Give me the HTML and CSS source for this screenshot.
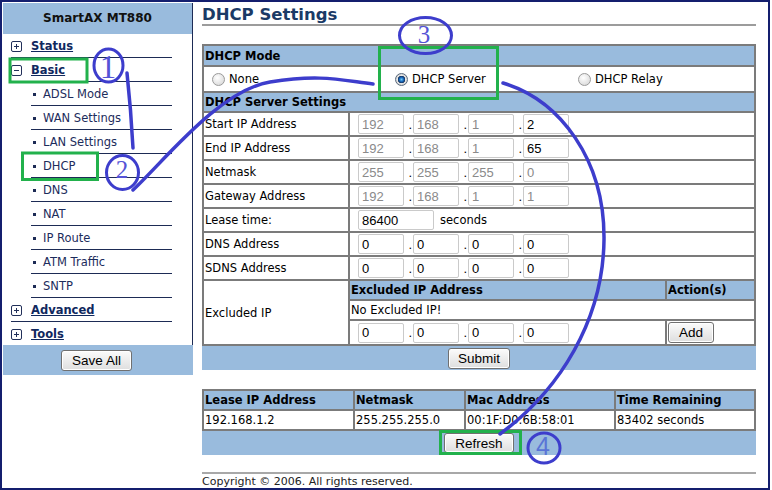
FILE: index.html
```html
<!DOCTYPE html>
<html lang="en">
<head>
  <meta charset="UTF-8" />
  <title>DHCP Settings</title>
  <link rel="stylesheet" href="styles.css">
</head>
<body>
<div class="page">
  <div class="frame">
    <aside class="side">
      <div class="side-head">SmartAX MT880</div>
      <ul class="menu">
        <li class="top"><span class="box plus"></span><a href="#">Status</a></li>
        <li class="top"><span class="box"></span><a href="#">Basic</a></li>
        <li class="sub"><a href="#">ADSL Mode</a></li>
        <li class="sub"><a href="#">WAN Settings</a></li>
        <li class="sub"><a href="#">LAN Settings</a></li>
        <li class="sub"><a href="#">DHCP</a></li>
        <li class="sub"><a href="#">DNS</a></li>
        <li class="sub"><a href="#">NAT</a></li>
        <li class="sub"><a href="#">IP Route</a></li>
        <li class="sub"><a href="#">ATM Traffic</a></li>
        <li class="sub"><a href="#">SNTP</a></li>
        <li class="top"><span class="box plus"></span><a href="#">Advanced</a></li>
        <li class="top last"><span class="box plus"></span><a href="#">Tools</a></li>
      </ul>
      <div class="side-foot"><button class="btn">Save All</button></div>
    </aside>

    <main class="content">
      <h1>DHCP Settings</h1>

      <div class="form-grid">
        <div class="hd span3">DHCP Mode</div>
        <div class="modes span3">
          <label class="mode"><span class="radio"></span>None</label>
          <label class="mode"><span class="radio on"></span>DHCP Server</label>
          <label class="mode"><span class="radio"></span>DHCP Relay</label>
        </div>
        <div class="hd span3">DHCP Server Settings</div>

        <div class="lbl">Start IP Address</div>
        <div class="val span2">
          <input class="field" value="192" disabled><span class="dot">.</span><input class="field" value="168" disabled><span class="dot">.</span><input class="field" value="1" disabled><span class="dot">.</span><input class="field" value="2">
        </div>

        <div class="lbl">End IP Address</div>
        <div class="val span2">
          <input class="field" value="192" disabled><span class="dot">.</span><input class="field" value="168" disabled><span class="dot">.</span><input class="field" value="1" disabled><span class="dot">.</span><input class="field" value="65">
        </div>

        <div class="lbl">Netmask</div>
        <div class="val span2">
          <input class="field" value="255" disabled><span class="dot">.</span><input class="field" value="255" disabled><span class="dot">.</span><input class="field" value="255" disabled><span class="dot">.</span><input class="field" value="0" disabled>
        </div>

        <div class="lbl">Gateway Address</div>
        <div class="val span2">
          <input class="field" value="192" disabled><span class="dot">.</span><input class="field" value="168" disabled><span class="dot">.</span><input class="field" value="1" disabled><span class="dot">.</span><input class="field" value="1" disabled>
        </div>

        <div class="lbl">Lease time:</div>
        <div class="val span2">
          <input class="field wide" value="86400"><span class="unit">seconds</span>
        </div>

        <div class="lbl">DNS Address</div>
        <div class="val span2">
          <input class="field" value="0"><span class="dot">.</span><input class="field" value="0"><span class="dot">.</span><input class="field" value="0"><span class="dot">.</span><input class="field" value="0">
        </div>

        <div class="lbl">SDNS Address</div>
        <div class="val span2">
          <input class="field" value="0"><span class="dot">.</span><input class="field" value="0"><span class="dot">.</span><input class="field" value="0"><span class="dot">.</span><input class="field" value="0">
        </div>

        <div class="lbl excl">Excluded IP</div>
        <div class="hd">Excluded IP Address</div>
        <div class="hd">Action(s)</div>
        <div class="txt span2">No Excluded IP!</div>
        <div class="val">
          <input class="field" value="0"><span class="dot">.</span><input class="field" value="0"><span class="dot">.</span><input class="field" value="0"><span class="dot">.</span><input class="field" value="0">
        </div>
        <div class="act"><button class="btn">Add</button></div>
      </div>

      <div class="bar"><button class="btn btn-submit">Submit</button></div>

      <div class="lease-grid">
        <div class="hd">Lease IP Address</div>
        <div class="hd">Netmask</div>
        <div class="hd">Mac Address</div>
        <div class="hd">Time Remaining</div>
        <div class="txt">192.168.1.2</div>
        <div class="txt">255.255.255.0</div>
        <div class="txt">00:1F:D0:6B:58:01</div>
        <div class="txt">83402 seconds</div>
      </div>

      <div class="bar bar-low"><button class="btn">Refresh</button></div>

      <div class="copy">Copyright &copy; 2006. All rights reserved.</div>
    </main>
  </div>

  <!-- hand drawn notes on top of the screenshot -->
  <svg class="marks" width="772" height="490" viewBox="0 0 772 490">
    <g fill="none" stroke="#22b14c" stroke-width="3">
      <rect x="10" y="59" width="77" height="23" />
      <rect x="22.5" y="153" width="75" height="26.5" />
      <rect x="379.5" y="47.5" width="118" height="51" />
      <rect x="440.5" y="431.5" width="80" height="22" />
    </g>
    <g fill="none" stroke="#3d3dcc" stroke-width="3">
      <ellipse cx="108.5" cy="65.5" rx="14.5" ry="16.5" />
      <ellipse cx="122.5" cy="172.5" rx="16" ry="17" />
      <ellipse cx="425.5" cy="35.5" rx="26" ry="18" />
      <ellipse cx="544" cy="448" rx="16" ry="15" />
    </g>
    <g fill="none" stroke="#3d3dcc" stroke-width="3.5" stroke-linecap="round">
      <path d="M127 73 Q131 110 133 148" />
      <path d="M133 190 C165 160 220 90 270 82 S340 80 373 84" />
      <path d="M503 83 C560 100 605 160 604 240 C603 320 560 390 500 434" />
    </g>
    <g class="num" text-anchor="middle">
      <text x="108" y="78" font-size="33">1</text>
      <text x="122" y="178" font-size="25">2</text>
      <text x="424" y="43" font-size="25">3</text>
      <text class="sans" x="543" y="455" font-size="25">4</text>
    </g>
  </svg>
</div>
</body>
</html>
```
FILE: styles.css
```css
body {
  margin: 0;
  font-family: "DejaVu Sans", Verdana, sans-serif;
  font-size: 11.5px;
  color: #000;
  background-color: #fff;
}

.page {
  position: relative;
  width: 772px;
  height: 490px;
  overflow: hidden;
}

.frame {
  display: flex;
  width: 770px;
  height: 490px;
  box-sizing: border-box;
  border: 2px solid #141e6e;
}

/* left menu */
.side {
  width: 190px;
  margin: 1px 0 0 1px;
  flex-shrink: 0;
}

.side-head {
  height: 31px;
  line-height: 31px;
  background-color: #99bbdd;
  border-right: 1px solid #1d2b55;
  text-align: center;
  font-weight: 700;
  font-size: 12px;
  color: #111;
}

.menu {
  list-style: none;
  margin: 0;
  padding: 0;
  border-right: 1px solid #1d2b55;
}

.menu li {
  display: flex;
  align-items: center;
  height: 22px;
  padding-top: 1px;
  margin: 0 20px 0 8px;
  border-bottom: 1px solid #1d2b55;
}

.menu li.last {
  border-bottom: none;
}

.menu a {
  color: #1c2c5c;
  text-decoration: none;
}

.menu li.top a {
  font-weight: 700;
  color: #10285e;
  text-decoration: underline;
}

.menu li.sub {
  margin-left: 28px;
  padding-left: 2px;
}

.menu li.sub::before {
  content: "";
  width: 3px;
  height: 3px;
  margin-right: 7px;
  background-color: #1d2b55;
}

.box {
  position: relative;
  width: 11px;
  height: 11px;
  margin-right: 9px;
  box-sizing: border-box;
  border: 1px solid #22305a;
  border-radius: 2px;
}

.box::before {
  content: "";
  position: absolute;
  left: 2px;
  right: 2px;
  top: 4px;
  height: 1px;
  background-color: #22305a;
}

.box.plus::after {
  content: "";
  position: absolute;
  top: 2px;
  bottom: 2px;
  left: 4px;
  width: 1px;
  background-color: #22305a;
}

.side-foot {
  display: flex;
  align-items: center;
  justify-content: center;
  height: 30px;
  padding-right: 3px;
  background-color: #99bbdd;
}

/* main area */
.content {
  flex: 1;
  padding: 0 12px 0 9px;
}

h1 {
  margin: 0 0 18px;
  padding-top: 3px;
  font-size: 16.5px;
  line-height: 19px;
  color: #1b3a66;
  border-bottom: 2px solid #9c9c9c;
}

.form-grid {
  display: grid;
  grid-template-columns: 144px 315px 87px;
  grid-template-rows: 19px 24px 18px repeat(7, 22px) 18px 18px 23px;
  gap: 2px;
  padding: 2px;
  background-color: #7b7b7b;
}

.form-grid > div,
.lease-grid > div {
  display: flex;
  align-items: center;
  background-color: #fff;
  white-space: nowrap;
}

.form-grid .hd,
.lease-grid .hd {
  background-color: #99bbdd;
  font-weight: 700;
  padding-left: 1px;
}

.span3 {
  grid-column: 1 / -1;
}

.span2 {
  grid-column: span 2;
}

.lbl {
  padding-left: 1px;
}

.lbl.excl {
  grid-row: span 3;
}

.val {
  padding-left: 8px;
}

.txt {
  padding-left: 1px;
}

.act {
  padding-left: 1px;
}

.modes .mode {
  display: flex;
  align-items: center;
  width: 183px;
  padding-left: 8px;
  box-sizing: border-box;
}

.radio {
  width: 13px;
  height: 13px;
  margin-right: 4px;
  box-sizing: border-box;
  border: 1px solid #9a9a9a;
  border-radius: 50%;
  background: radial-gradient(circle at 40% 35%, #ffffff, #d2d2d2);
}

.radio.on {
  border-color: #5b6b7d;
  background: radial-gradient(circle, #6fc8f5 0, #1a6cc0 2px, #12305c 3.5px, #e6e6e6 4px, #cdcdcd 6px);
}

.field {
  width: 46px;
  height: 20px;
  box-sizing: border-box;
  padding: 0 3px;
  border: 1px solid #cacaca;
  border-radius: 2px;
  font: 13px "Liberation Sans", Arial, sans-serif;
  color: #000;
  background-color: #fff;
}

.field:disabled {
  color: #8a8a8a;
  background-color: #fff;
}

.field.wide {
  width: 76px;
}

.dot {
  width: 9px;
  padding-right: 1px;
  box-sizing: border-box;
  text-align: right;
  font: 13px "Liberation Sans", Arial, sans-serif;
}

.unit {
  margin-left: 6px;
}

.bar {
  display: flex;
  align-items: center;
  justify-content: center;
  height: 24px;
  background-color: #99bbdd;
}

.btn {
  height: 21px;
  padding: 0 10px;
  font: 13.5px "Liberation Sans", Arial, sans-serif;
  color: #000;
  background: linear-gradient(#fbfbfb, #dedede);
  border: 1px solid #707070;
  border-radius: 3px;
  box-shadow: inset 0 0 0 1px #fff;
}

.btn-submit {
  padding: 0 9px;
}

.bar-low .btn {
  height: 20px;
}

.lease-grid {
  display: grid;
  grid-template-columns: 149px 109px 148px 138px;
  grid-template-rows: 18px 18px;
  gap: 2px;
  margin-top: 19px;
  padding: 2px;
  background-color: #7b7b7b;
}

.copy {
  margin-top: 17px;
  padding-top: 1px;
  border-top: 2px solid #a8a8a8;
  font-size: 11px;
  line-height: 13px;
  color: #222;
}

/* annotation layer */
.marks {
  position: absolute;
  top: 0;
  left: 0;
  pointer-events: none;
}

.num text {
  font-family: "Liberation Serif", serif;
  fill: #5553d6;
}

.num text.sans {
  font-family: "Liberation Sans", sans-serif;
  fill: #5a74d6;
}
```
